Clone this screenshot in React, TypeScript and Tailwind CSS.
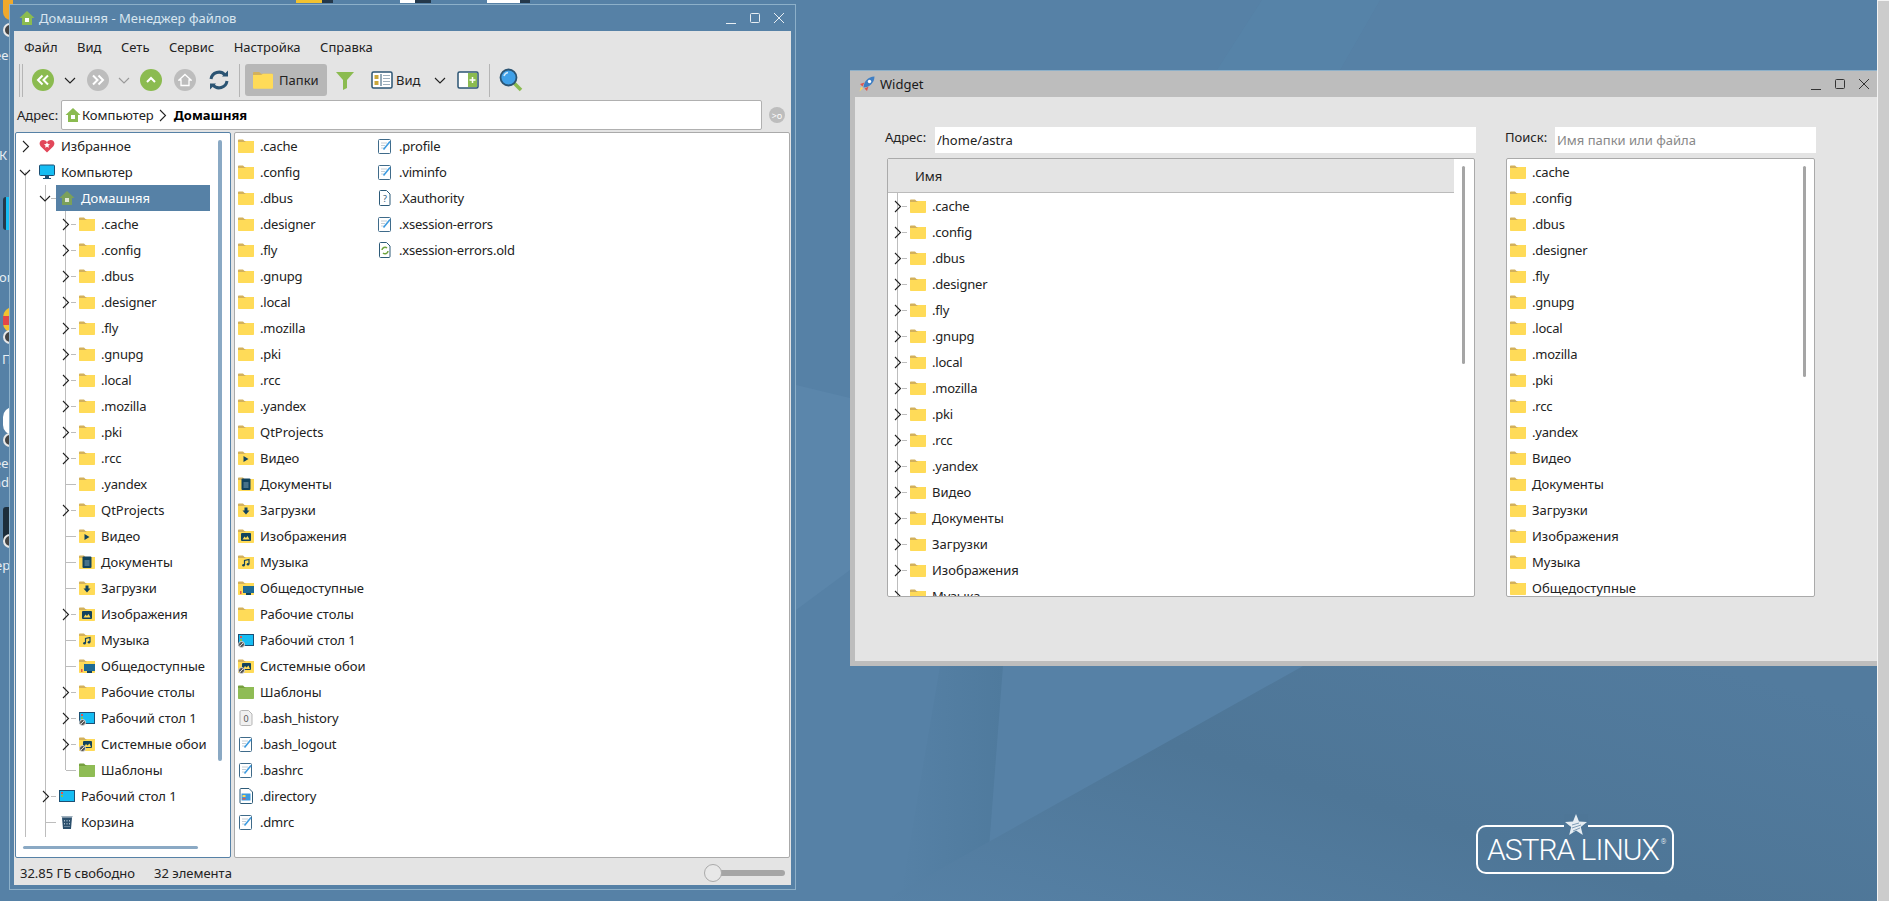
import type { ReactNode } from 'react';

const FONT = "[font-family:'Noto_Sans',sans-serif]";

const dotDirs = ['.cache', '.config', '.dbus', '.designer', '.fly', '.gnupg', '.local', '.mozilla', '.pki', '.rcc', '.yandex'];

type Kind =
  | 'folder' | 'video' | 'docs' | 'down' | 'pics' | 'music' | 'public' | 'desk' | 'desk1' | 'wall' | 'templates'
  | 'text' | 'unknown' | 'trash' | 'sync' | 'history' | 'dirfile';

function Folder({ color = '#ffdb58', tab = '#d3b15c', children }: { color?: string; tab?: string; children?: ReactNode }) {
  return (
    <svg width="16" height="16" viewBox="0 0 16 16" className="shrink-0">
      <path d="M0 2.500c0-.6.4-1 1-1h4l1.500 1.500H15c.6 0 1 .4 1 1V6H0z" fill={tab} />
      <path d="M0 4h6.500L8 3h7c.6 0 1 .4 1 1v10c0 .6-.4 1-1 1H1c-.6 0-1-.4-1-1z" fill={color} />
      {children}
    </svg>
  );
}

function DeskBadge() {
  return (
    <g>
      <circle cx="3.500" cy="12.500" r="3" fill="#555" stroke="#ddd" />
      <path d="M2 14l3-3" stroke="#ddd" />
    </g>
  );
}

function DocShell({ children }: { children: ReactNode }) {
  return (
    <svg width="16" height="16" viewBox="0 0 16 16" className="shrink-0">
      <path d="M3.500.5h6l3.500 3.500v10.500c0 .6-.4 1-1 1h-8.500c-.6 0-1-.4-1-1v-13c0-.6.400-1 1-1z" fill="#fff" stroke="#2c5a78" />
      {children}
    </svg>
  );
}

function FileIcon({ kind }: { kind: Kind }) {
  const navy = '#12435e';
  if (kind === 'video') return <Folder><path d="M5.500 6l5 3-5 3z" fill={navy} /></Folder>;
  if (kind === 'docs') return <Folder><rect x="3.500" y="2.500" width="9" height="11.500" rx="1" fill={navy} /><path d="M5.500 7h5M5.500 9h5M5.500 11h5" stroke="#7fa3b5" /></Folder>;
  if (kind === 'down') return <Folder><path d="M6.500 5.500h3v3h2L8 12.500 4.500 8.500h2z" fill={navy} /></Folder>;
  if (kind === 'pics') return <Folder><rect x="3" y="5" width="10" height="8" rx="1" fill={navy} /><path d="M4.500 11.500l2-3 1.500 1.500 1.500-2 2 3.500z" fill="#ffdb58" /></Folder>;
  if (kind === 'music') return <Folder><path d="M6.500 11V6.500l4.500-1V10" stroke={navy} strokeWidth="1.200" fill="none" /><circle cx="5.500" cy="11.200" r="1.300" fill={navy} /><circle cx="10" cy="10.200" r="1.300" fill={navy} /></Folder>;
  if (kind === 'public') return <Folder><rect x="5" y="6" width="11" height="7" fill="#1d6a94" /><rect x="8" y="13" width="5" height="2" fill="#12435e" /><rect x="2" y="11" width="1.500" height="3" fill="#e2574c" /></Folder>;
  if (kind === 'desk' || kind === 'desk1') return (
    <svg width="16" height="16" viewBox="0 0 16 16" className="shrink-0">
      <rect x=".5" y="2.500" width="15" height="11" fill="#16bdf3" stroke="#1d4f73" />
      <rect x="2" y="4" width="2" height="2" fill="#e2574c" /><rect x="2" y="7" width="2" height="2" fill="#8bbb50" />
      {kind === 'desk' && <DeskBadge />}
    </svg>
  );
  if (kind === 'wall') return <Folder><rect x="4" y="5" width="9" height="7" rx="1" fill={navy} /><path d="M5 11l2-3 1.500 1.500 2-2 1.500 3.500z" fill="#ffdb58" /><DeskBadge /></Folder>;
  if (kind === 'templates') return <Folder color="#8fbc55" tab="#76a03f" />;
  if (kind === 'trash') return (
    <svg width="16" height="16" viewBox="0 0 16 16" className="shrink-0">
      <path d="M2 2h12l-1 1.500H3z" fill="#9fb0bd" />
      <path d="M3 3.500h10L12 15H4z" fill="#2b4f6c" />
      <path d="M5.500 6v1.500M8 6v1.500M10.500 6v1.500M5.500 9v1.500M8 9v1.500M10.500 9v1.500M6 12v1M8 12v1M10 12v1" stroke="#a9bccb" />
    </svg>
  );
  if (kind === 'unknown') return (
    <DocShell>
      <text x="8" y="12" fontSize="9" textAnchor="middle" fill="#2c5a78" fontFamily="Noto Sans">?</text>
    </DocShell>
  );
  if (kind === 'sync') return (
    <DocShell>
      <path d="M5 8a3 3 0 0 1 5-2M11 9a3 3 0 0 1-5 2" stroke="#6ea33f" strokeWidth="1.500" fill="none" />
    </DocShell>
  );
  if (kind === 'history') return (
    <svg width="16" height="16" viewBox="0 0 16 16" className="shrink-0">
      <path d="M3.500.5h7L14 4v10c0 .8-.6 1.500-1.500 1.500h-9C2.600 15.500 2 14.800 2 14V2C2 1.200 2.600.5 3.500.5z" fill="#f0f0f0" stroke="#b5b5b5" />
      <text x="8" y="11.500" fontSize="9" textAnchor="middle" fill="#555" fontFamily="Noto Sans">0</text>
    </svg>
  );
  if (kind === 'dirfile') return (
    <svg width="16" height="16" viewBox="0 0 16 16" className="shrink-0">
      <path d="M3 .5h8l3.500 3.500v10.500c0 .6-.4 1-1 1H3c-.6 0-1-.4-1-1v-13c0-.6.4-1 1-1z" fill="#fff" stroke="#2c5a78" />
      <rect x="3.500" y="5.500" width="9" height="7" fill="#3d9be0" /><rect x="4.500" y="7" width="3" height="2" fill="#ffdb58" /><rect x="4.500" y="10" width="3" height="1.500" fill="#e2574c" />
    </svg>
  );
  if (kind === 'text') return (
    <svg width="16" height="16" viewBox="0 0 16 16" className="shrink-0">
      <rect x="1.500" y="1.500" width="12" height="14" rx="1" fill="#fff" stroke="#3f6b8a" />
      <path d="M4 5h6M4 7.500h4M4 10h3" stroke="#c4ced6" />
      <path d="M6.500 11.500L13 3.500" stroke="#3d9be0" strokeWidth="1.600" />
    </svg>
  );
  return <Folder />;
}

const homeEntries: { name: string; kind: Kind; arrow: boolean }[] = [
  ...dotDirs.map((n) => ({ name: n, kind: 'folder' as Kind, arrow: n !== '.yandex' })),
  { name: 'QtProjects', kind: 'folder', arrow: true },
  { name: 'Видео', kind: 'video', arrow: false },
  { name: 'Документы', kind: 'docs', arrow: false },
  { name: 'Загрузки', kind: 'down', arrow: false },
  { name: 'Изображения', kind: 'pics', arrow: true },
  { name: 'Музыка', kind: 'music', arrow: false },
  { name: 'Общедоступные', kind: 'public', arrow: false },
  { name: 'Рабочие столы', kind: 'folder', arrow: true },
  { name: 'Рабочий стол 1', kind: 'desk', arrow: true },
  { name: 'Системные обои', kind: 'wall', arrow: true },
  { name: 'Шаблоны', kind: 'templates', arrow: false },
];

const fileColOne: { name: string; kind: Kind }[] = [
  ...homeEntries.map(({ name, kind }) => ({ name, kind })),
  { name: '.bash_history', kind: 'history' },
  { name: '.bash_logout', kind: 'text' },
  { name: '.bashrc', kind: 'text' },
  { name: '.directory', kind: 'dirfile' },
  { name: '.dmrc', kind: 'text' },
];

const fileColTwo: { name: string; kind: Kind }[] = [
  { name: '.profile', kind: 'text' },
  { name: '.viminfo', kind: 'text' },
  { name: '.Xauthority', kind: 'unknown' },
  { name: '.xsession-errors', kind: 'text' },
  { name: '.xsession-errors.old', kind: 'sync' },
];

const widgetDirs = [...dotDirs, 'Видео', 'Документы', 'Загрузки', 'Изображения', 'Музыка', 'Общедоступные'];

// dot names run a little narrower in the reference
function Name({ text }: { text: string }) {
  return <span className={`whitespace-nowrap ${text.startsWith('.') ? 'tracking-[-0.2px]' : ''}`}>{text}</span>;
}

function ChevRight({ className = '', style }: { className?: string; style?: React.CSSProperties }) {
  return (
    <svg width="8" height="13" viewBox="0 0 8 13" className={className} style={style}>
      <path d="M1 1l5.500 5.500L1 12" fill="none" stroke="#222" strokeWidth="1.100" />
    </svg>
  );
}

function ChevDown({ className = '', color = '#222', style }: { className?: string; color?: string; style?: React.CSSProperties }) {
  return (
    <svg width="12" height="7" viewBox="0 0 12 7" className={className} style={style}>
      <path d="M1 1l5 5 5-5" fill="none" stroke={color} strokeWidth="1.100" />
    </svg>
  );
}

// one tree row; depth sets the 20px indent, guide lines are drawn per level
function TreeRow({ depth, label, arrow, open, selected, last, halfGuide, children }: {
  depth: number; label: string; arrow?: boolean; open?: boolean; selected?: boolean; last?: boolean; halfGuide?: boolean; children: ReactNode;
}) {
  const lineX = 9 + depth * 20;
  return (
    <div className="relative flex h-[26px] items-center" style={{ paddingLeft: 23 + depth * 20 }}>
      {halfGuide && <span className="absolute left-[9px] top-[13px] h-[13px] w-px bg-[#bdbdbd]" />}
      {depth >= 1 && <span className="absolute left-[9px] top-0 h-full w-px bg-[#bdbdbd]" />}
      {depth >= 1 && <span className="absolute left-[29px] top-0 h-full w-px bg-[#bdbdbd]" />}
      {depth >= 2 && <span className="absolute left-[49px] top-0 w-px bg-[#bdbdbd]" style={{ height: last ? 13 : 26 }} />}
      {depth >= 1 && (
        <span
          className="absolute top-[13px] h-px bg-[#bdbdbd]"
          style={{ left: lineX + (arrow ? 6 : 1), width: arrow ? 5 : 10 }}
        />
      )}
      {arrow && !open && <ChevRight className="absolute top-[7px]" style={{ left: lineX - 3 }} />}
      {arrow && open && <ChevDown className="absolute top-[10px]" style={{ left: lineX - 6 }} />}
      <div className={`relative flex h-full items-center gap-[6px] ${selected ? '-ml-[3px] w-[154px] bg-[#5681a6] pl-[3px] text-white' : ''}`}>
        {children}
        <Name text={label} />
      </div>
    </div>
  );
}

function FileRow({ name, kind }: { name: string; kind: Kind }) {
  return (
    <div className="flex h-[26px] items-center gap-[6px]">
      <FileIcon kind={kind} />
      <Name text={name} />
    </div>
  );
}

function RoundBtn({ bg, children }: { bg: string; children: ReactNode }) {
  return (
    <span className="flex h-[22px] w-[22px] shrink-0 items-center justify-center rounded-full" style={{ background: bg }}>
      {children}
    </span>
  );
}

function WinButtons({ color }: { color: string }) {
  return (
    <div className="flex items-center gap-[12px]">
      <svg width="12" height="12" viewBox="0 0 12 12"><path d="M1 11.500h10" stroke={color} /></svg>
      <svg width="12" height="12" viewBox="0 0 12 12"><rect x="1.500" y="1.500" width="9" height="9" rx="1" fill="none" stroke={color} /></svg>
      <svg width="12" height="12" viewBox="0 0 12 12"><path d="M1 1l10 10M11 1L1 11" stroke={color} /></svg>
    </div>
  );
}

function HomeIcon() {
  return (
    <svg width="16" height="16" viewBox="0 0 16 16" className="shrink-0">
      <path d="M8 1l7.500 7H13v7H3V8H.5z" fill="#8bbb50" />
      <rect x="6" y="8" width="4" height="4" fill="#fff" />
    </svg>
  );
}

function FileManager() {
  return (
    <div className="absolute left-[9px] top-[4px] flex h-[886px] w-[787px] flex-col border border-[#8db0c9] bg-[#5681a6] pb-[4px]">
      <div className="flex h-[26px] shrink-0 items-center justify-between pl-[9px] pr-[10px] text-[#d8e6f0]">
        <div className="flex items-center gap-[4px]">
          <HomeIcon />
          <span>Домашняя - Менеджер файлов</span>
        </div>
        <WinButtons color="#e8eef3" />
      </div>
      <div className="mx-[4px] flex min-h-0 flex-1 flex-col bg-[#e4e4e4] text-[#222]">
        <div className="flex h-[32px] shrink-0 items-center gap-[19.5px] pl-[10px]">
          {['Файл', 'Вид', 'Сеть', 'Сервис', 'Настройка', 'Справка'].map((m) => <span key={m}>{m}</span>)}
        </div>
        <div className="flex h-[34px] shrink-0 items-center pl-[5px]">
          <span className="mr-[9px] h-[33px] w-[4px] border-x border-[#b5b5b5]" />
          <RoundBtn bg="#8bbb50"><svg width="14" height="12" viewBox="0 0 14 12"><path d="M6.500 1.500L2 6l4.500 4.500M12 1.500L7.500 6l4.500 4.500" stroke="#fff" strokeWidth="2" fill="none" /></svg></RoundBtn>
          <ChevDown className="ml-[10px] mr-[11px]" />
          <RoundBtn bg="#bdbdbd"><svg width="14" height="12" viewBox="0 0 14 12"><path d="M2 1.500L6.500 6 2 10.500M7.500 1.500L12 6l-4.500 4.500" stroke="#fff" strokeWidth="2" fill="none" /></svg></RoundBtn>
          <ChevDown color="#999" className="ml-[9px] mr-[10px]" />
          <RoundBtn bg="#8bbb50"><svg width="12" height="12" viewBox="0 0 12 12"><path d="M2 8l4-4 4 4" stroke="#fff" strokeWidth="2" fill="none" /></svg></RoundBtn>
          <span className="ml-[12px]"><RoundBtn bg="#bdbdbd"><svg width="14" height="14" viewBox="0 0 14 14"><path d="M7 1.500L13 7h-2v5.500H3V7H1z" fill="none" stroke="#fff" strokeWidth="1.300" /></svg></RoundBtn></span>
          <svg width="22" height="22" viewBox="0 0 22 22" className="ml-[12px]">
            <path d="M3 10a8 8 0 0 1 14-4M19 12a8 8 0 0 1-14 4" stroke="#2b5473" strokeWidth="3" fill="none" />
            <path d="M14 7.500h6v-6zM8 14.500H2v6z" fill="#2b5473" />
          </svg>
          <span className="ml-[9px] mr-[5px] h-[33px] w-px bg-[#b5b5b5]" />
          <div className="flex h-[32px] w-[82px] items-center gap-[5px] rounded-[3px] bg-[#b7b7b7] pl-[8px]">
            <svg width="20" height="20" viewBox="0 0 16 16" className="shrink-0"><path d="M0 2.500c0-.6.4-1 1-1h4l1.500 1.500H15c.6 0 1 .4 1 1V6H0z" fill="#d3b15c" /><path d="M0 4h6.500L8 3h7c.6 0 1 .4 1 1v10c0 .6-.4 1-1 1H1c-.6 0-1-.4-1-1z" fill="#ffdb58" /></svg>
            <span className="ml-[1px]">Папки</span>
          </div>
          <svg width="20" height="20" viewBox="0 0 20 20" className="ml-[8px]"><path d="M1 2h18l-7 8v8l-4 2V10z" fill="#8bbb50" /></svg>
          <svg width="22" height="18" viewBox="0 0 22 18" className="ml-[16px]">
            <rect x="1" y="1" width="20" height="16" rx="1.500" fill="#fff" stroke="#2b5473" strokeWidth="1.500" />
            <rect x="3.500" y="4" width="4" height="4" fill="#c9a63a" /><rect x="3.500" y="10" width="4" height="4" fill="#c9a63a" />
            <path d="M10 3v12" stroke="#2b5473" />
            <path d="M12 4.500h7M12 7.500h7M12 10.500h7M12 13.500h7" stroke="#9fb0bd" />
          </svg>
          <span className="ml-[3px]">Вид</span>
          <ChevDown className="ml-[14px]" />
          <svg width="22" height="18" viewBox="0 0 22 18" className="ml-[11px]">
            <rect x="1" y="1" width="20" height="16" rx="1.500" fill="#fff" stroke="#2b5473" strokeWidth="1.500" />
            <rect x="11" y="2" width="9" height="14" fill="#8bbb50" />
            <path d="M15.500 6v6M12.500 9h6" stroke="#fff" strokeWidth="1.500" />
          </svg>
          <span className="mx-[10px] h-[33px] w-px bg-[#b5b5b5]" />
          <svg width="24" height="24" viewBox="0 0 24 24" className="-ml-[1px]">
            <path d="M14 14l8 8" stroke="#8bbb50" strokeWidth="3.500" />
            <circle cx="9.500" cy="9.500" r="8" fill="#3fa0e8" stroke="#2b5473" strokeWidth="1.800" />
            <path d="M5 8a5 5 0 0 1 4-3.500" stroke="#cfe8fa" strokeWidth="1.500" fill="none" />
          </svg>
        </div>
        <div className="flex h-[35px] shrink-0 items-start pl-[3px] pr-[5px] pt-[3px]">
          <span className="w-[44px] leading-[30px]">Адрес:</span>
          <div className="flex h-[30px] w-[701px] items-center rounded-[2px] border border-[#b0b0b0] bg-white pl-[3px]">
            <HomeIcon />
            <span className="ml-[1px]">Компьютер</span>
            <ChevRight className="ml-[5px] mr-[7px]" />
            <span className="font-bold text-black">Домашняя</span>
          </div>
          <span className="ml-[7px] mt-[7px] flex h-[16px] w-[16px] items-center justify-center rounded-full bg-[#bdbdbd] text-[9px] leading-none text-white">&gt;o</span>
        </div>
        <div className="flex shrink-0 gap-[3px] px-[1px]">
          <div className="relative h-[726px] w-[216px] shrink-0 overflow-hidden rounded-[2px] border border-[#5681a6] bg-white">
            <TreeRow depth={0} label="Избранное" arrow>
              <svg width="16" height="16" viewBox="0 0 16 16" className="shrink-0">
                <path d="M8 14.500L1.800 8.500C-.6 6 .8 2 4.200 2 5.800 2 7 2.800 8 4c1-1.200 2.200-2 3.800-2 3.400 0 4.800 4 2.400 6.500z" fill="#e2475a" />
                <path d="M8 4.200l.9 1.900 2.100.2-1.600 1.400.5 2.100L8 8.700l-1.900 1.100.5-2.100L5 6.300l2.100-.2z" fill="#fff" />
              </svg>
            </TreeRow>
            <TreeRow depth={0} label="Компьютер" arrow open halfGuide>
              <svg width="16" height="16" viewBox="0 0 16 16" className="shrink-0"><rect x=".5" y="1" width="15" height="10.500" rx="1" fill="#16bdf3" stroke="#1d4f73" /><rect x="6" y="12" width="4" height="2" fill="#1d4f73" /><rect x="4" y="14" width="8" height="1" fill="#1d4f73" /></svg>
            </TreeRow>
            <TreeRow depth={1} label="Домашняя" arrow open selected>
              <svg width="16" height="16" viewBox="0 0 16 16" className="shrink-0"><path d="M8 1l7.500 7H13v7H3V8H.5z" fill="#7ba05a" /><rect x="6" y="8" width="4" height="4" fill="#dfe7d5" /></svg>
            </TreeRow>
            {homeEntries.map((e, i) => (
              <TreeRow key={e.name} depth={2} label={e.name} arrow={e.arrow} last={i === homeEntries.length - 1}>
                <FileIcon kind={e.kind} />
              </TreeRow>
            ))}
            <TreeRow depth={1} label="Рабочий стол 1" arrow>
              <FileIcon kind="desk1" />
            </TreeRow>
            <TreeRow depth={1} label="Корзина">
              <FileIcon kind="trash" />
            </TreeRow>
            <div className="relative h-[2px]">
              <span className="absolute left-[9px] h-full w-px bg-[#bdbdbd]" />
              <span className="absolute left-[29px] h-full w-px bg-[#bdbdbd]" />
            </div>
            <span className="absolute left-[202px] top-[7px] h-[621px] w-[4px] rounded-full bg-[#8aa9c4]" />
            <span className="absolute left-[7px] top-[713px] h-[3px] w-[175px] rounded-full bg-[#8aa9c4]" />
          </div>
          <div className="flex h-[726px] flex-1 rounded-[2px] border border-[#aaa] bg-white pl-[3px]">
            <div className="w-[139px]">{fileColOne.map((f) => <FileRow key={f.name} {...f} />)}</div>
            <div>{fileColTwo.map((f) => <FileRow key={f.name} {...f} />)}</div>
          </div>
        </div>
        <div className="flex h-[27px] shrink-0 items-center gap-[19px] pl-[6px] pr-[6px] pt-[3px]">
          <span>32.85 ГБ свободно</span>
          <span>32 элемента</span>
          <div className="relative ml-auto h-[6px] w-[72px] rounded-full bg-[#a5a5a5]">
            <span className="absolute -left-[9px] -top-[6px] h-[18px] w-[18px] rounded-full border border-[#aaa] bg-[#e8e8e8]" />
          </div>
        </div>
      </div>
    </div>
  );
}

function WidgetWindow() {
  return (
    <div className="absolute left-[850px] top-[70px] flex h-[596px] w-[1027px] flex-col border-b-[5px] border-l-[5px] border-[#bdbdbd] text-[#222]">
      <div className="-ml-[5px] flex h-[27px] shrink-0 items-center justify-between border-t border-[#8db0c9] bg-[#bdbdbd] pl-[9px] pr-[7px] text-[#1a1a1a]">
        <div className="flex items-center gap-[5px]">
          <svg width="16" height="16" viewBox="0 0 16 16">
            <path d="M4.500 11.500C4.500 6 9 .5 15.500.5c0 6.500-5.500 11-11 11z" fill="#3f7fc4" />
            <circle cx="10.500" cy="5.500" r="1.700" fill="#fff" />
            <path d="M5.500 6.500L1 8l2.500 2.500zM9.500 10.500L8 15l-2.500-2.500z" fill="#e2574c" />
            <path d="M4 12l-3.500 3.500L2 11z" fill="#ffdb58" />
          </svg>
          <span>Widget</span>
        </div>
        <WinButtons color="#333" />
      </div>
      <div className="flex flex-1 bg-[#e4e4e4] pl-[30px] pt-[30px]">
        <div className="flex flex-col">
          <div className="flex h-[26px] items-start">
            <span className="w-[50px] leading-[20px]">Адрес:</span>
            <div className="flex h-[26px] w-[541px] items-center bg-white pl-[2px]">/home/astra</div>
          </div>
          <div className="relative ml-[2px] mt-[5px] h-[439px] w-[588px] overflow-hidden rounded-[2px] border border-[#aaa] bg-white">
            <div className="flex h-[34px] w-[566px] items-center border-b border-[#bbb] bg-[#e4e4e4] pl-[27px]">Имя</div>
            {[...dotDirs, 'Видео', 'Документы', 'Загрузки', 'Изображения', 'Музыка'].map((n) => (
              <div key={n} className="relative flex h-[26px] items-center gap-[6px] pl-[22px]">
                <span className="absolute left-[9px] top-0 h-full w-px bg-[#bdbdbd]" />
                <span className="absolute left-[14px] top-[13px] h-px w-[5px] bg-[#bdbdbd]" />
                <ChevRight className="absolute left-[6px] top-[7px]" />
                <Folder />
                <Name text={n} />
              </div>
            ))}
            <span className="absolute left-[574px] top-[7px] h-[198px] w-[3px] rounded-full bg-[#a5a5a5]" />
          </div>
        </div>
        <div className="ml-[29px] flex flex-col">
          <div className="flex h-[26px] items-start">
            <span className="w-[50px] leading-[20px]">Поиск:</span>
            <div className="flex h-[26px] w-[261px] items-center bg-white pl-[2px] text-[#888]">Имя папки или файла</div>
          </div>
          <div className="relative ml-[1px] mt-[5px] h-[439px] w-[309px] overflow-hidden rounded-[2px] border border-[#aaa] bg-white pl-[3px]">
            {widgetDirs.map((n) => (
              <div key={n} className="flex h-[26px] items-center gap-[6px]">
                <Folder />
                <Name text={n} />
              </div>
            ))}
            <span className="absolute left-[296px] top-[7px] h-[211px] w-[3px] rounded-full bg-[#a5a5a5]" />
          </div>
        </div>
      </div>
    </div>
  );
}

function Wallpaper() {
  return (
    <svg className="absolute inset-0 h-full w-full" viewBox="0 0 1877 901" preserveAspectRatio="none">
      <defs>
        <linearGradient id="faceDark" x1="0" y1="1" x2="1" y2="0.2">
          <stop offset="0" stopColor="#5681a6" />
          <stop offset="0.5" stopColor="#4e7697" />
          <stop offset="1" stopColor="#527b9e" />
        </linearGradient>
        <linearGradient id="faceLeft" x1="0" y1="0" x2="1" y2="0">
          <stop offset="0" stopColor="#5681a6" />
          <stop offset="1" stopColor="#4f7a9d" />
        </linearGradient>
      </defs>
      <rect width="1877" height="901" fill="#5681a6" />
      <path d="M796 385L850 398V570L796 610z" fill="#5b86ab" />
      <path d="M940 666H1003L985 901H900z" fill="url(#faceLeft)" />
      <path d="M1303 666H1877V901H883z" fill="url(#faceDark)" />
      <path d="M1217 70L1262 0H1380L1340 70z" fill="#598aaf" opacity="0.25" />
    </svg>
  );
}

function AstraLogo() {
  return (
    <div className="absolute left-[1476px] top-[825px] flex h-[49px] w-[198px] items-center rounded-[10px] border-[2px] border-white pl-[9px] text-[30px] leading-none font-light tracking-[-1px] whitespace-nowrap text-white [font-family:'Roboto',sans-serif]">
      <svg width="24" height="21" viewBox="0 0 24 21" className="absolute -top-[13px] left-[86px] bg-[#4e7697]">
        <path d="M12 0l3 7.500 8 .5-6.200 5 2 8L12 16.500 5.200 21l2-8L1 8l8-.5z" fill="#e6edf2" />
        <path d="M8 11l7-2M8 14l9-3M9 17l7-3" stroke="#7f9db6" />
      </svg>
      ASTRA LINUX
      <span className="mb-[14px] ml-[2px] text-[7px] tracking-normal">®</span>
    </div>
  );
}

// bits of the desktop that stick out from behind the file manager
function DesktopBits() {
  return (
    <div className="absolute inset-0 text-[13px] text-[#e8eef3]">
      <span className="absolute left-[296px] top-0 h-[3px] w-[26px] bg-[#f2c230]" />
      <span className="absolute left-[322px] top-0 h-[3px] w-[11px] bg-[#24384a]" />
      <span className="absolute left-[400px] top-0 h-[3px] w-[15px] bg-white" />
      <span className="absolute left-[415px] top-0 h-[3px] w-[16px] bg-[#24384a]" />
      <span className="absolute left-[487px] top-0 h-[3px] w-[33px] bg-white" />
      <span className="absolute left-[520px] top-0 h-[3px] w-[10px] bg-[#24384a]" />
      <span className="absolute left-[3px] top-0 h-[20px] w-[10px] rounded-bl-[8px] bg-[#f0a92b]" />
      <span className="absolute left-[3px] top-[23px] h-[14px] w-[14px] rounded-full border-2 border-[#e8e8e8] bg-[#444]" />
      <span className="absolute -left-[6px] top-[46px]">ее</span>
      <span className="absolute -left-[1px] top-[146px]">К</span>
      <span className="absolute left-[3px] top-[197px] h-[33px] w-[10px] rounded-l-[3px] border-l-[3px] border-[#24384a] bg-[#16bdf3]" />
      <span className="absolute -left-[1px] top-[268px]">ом</span>
      <span className="absolute left-[3px] top-[307px] h-[26px] w-[10px] rounded-l-[10px] bg-[#f2c230]" />
      <span className="absolute left-[3px] top-[316px] h-[9px] w-[10px] bg-[#e2474a]" />
      <span className="absolute left-[3px] top-[330px] h-[14px] w-[14px] rounded-full border-2 border-[#e8e8e8] bg-[#444]" />
      <span className="absolute left-[2px] top-[350px]">П</span>
      <span className="absolute left-[3px] top-[407px] h-[28px] w-[12px] rounded-l-[10px] bg-white" />
      <span className="absolute left-[3px] top-[433px] h-[14px] w-[14px] rounded-full border-2 border-[#e8e8e8] bg-[#444]" />
      <span className="absolute -left-[6px] top-[454px]">ее</span>
      <span className="absolute -left-[7px] top-[473px]">nd</span>
      <span className="absolute left-[3px] top-[507px] h-[34px] w-[10px] rounded-l-[3px] bg-[#1d2d3a]" />
      <span className="absolute left-[3px] top-[534px] h-[14px] w-[14px] rounded-full border-2 border-[#e8e8e8] bg-[#444]" />
      <span className="absolute -left-[5px] top-[556px]">ер</span>
    </div>
  );
}

export default function App() {
  return (
    <div className={`relative h-[901px] w-[1889px] overflow-hidden bg-[#cccccc] text-[13px] leading-[18px] ${FONT}`}>
      <div className="absolute inset-y-0 left-0 w-[1877px] overflow-hidden">
        <Wallpaper />
        <DesktopBits />
      </div>
      <span className="absolute left-[1877px] top-0 h-full w-px bg-[#f4f4f4]" />
      <span className="absolute left-[1877px] top-0 h-px w-[12px] bg-[#f4f4f4]" />
      <FileManager />
      <WidgetWindow />
      <AstraLogo />
    </div>
  );
}
